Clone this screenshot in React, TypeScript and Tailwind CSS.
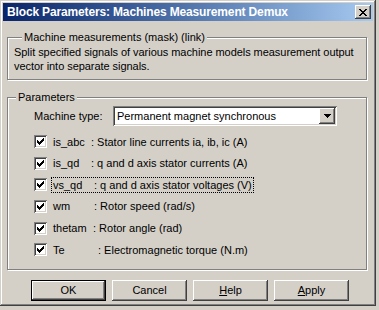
import React from 'react';

const raised =
  'shadow-[inset_-1px_-1px_#404040,inset_1px_1px_#ffffff,inset_-2px_-2px_#808080,inset_2px_2px_#d4d0c8]';
const sunken =
  'shadow-[inset_1px_1px_#808080,inset_-1px_-1px_#ffffff,inset_2px_2px_#404040,inset_-2px_-2px_#d4d0c8]';
const etched = 'border border-[#808080] shadow-[1px_1px_0_#ffffff,inset_1px_1px_0_#ffffff]';

const signals = [
  { name: 'is_abc', w: 'w-[38px]', desc: ': Stator line currents ia, ib, ic (A)' },
  { name: 'is_qd', w: 'w-[38px]', desc: ': q and d axis stator currents (A)' },
  { name: 'vs_qd', w: 'w-[41px]', desc: ': q and d axis stator voltages (V)', focus: true },
  { name: 'wm', w: 'w-[41px]', desc: ': Rotor speed (rad/s)' },
  { name: 'thetam', w: 'w-[40px]', desc: ': Rotor angle (rad)' },
  { name: 'Te', w: 'w-[45px]', desc: ': Electromagnetic torque (N.m)' },
];

function CheckBox() {
  return (
    <div className={`w-[13px] h-[13px] bg-white ${sunken} flex items-center justify-center shrink-0`}>
      <svg width="7" height="7" viewBox="0 0 7 7" shapeRendering="crispEdges">
        <path d="M0 2h1v1h1v1h1v-1h1v-1h1v-1h1v-1h1v3h-1v1h-1v1h-1v1h-1v1h-1v-1h-1v-1h-1z" fill="#000" />
      </svg>
    </div>
  );
}

function Button({ children, def }: { children: React.ReactNode; def?: boolean }) {
  return (
    <div className={`w-[75px] h-[21px] ${def ? 'border border-black' : ''}`}>
      <div className={`w-full h-full bg-[#d4d0c8] ${raised} flex items-center justify-center text-[11px] text-black`}>
        {children}
      </div>
    </div>
  );
}

export default function App() {
  return (
    <div className="w-[379px] h-[310px] bg-[#d4d0c8] font-['Liberation_Sans',Arial,sans-serif] text-black">
      <div
        className={`w-[376px] h-[306px] bg-[#d4d0c8] p-[3px] flex flex-col shadow-[inset_-1px_-1px_#404040,inset_1px_1px_#d4d0c8,inset_-2px_-2px_#808080,inset_2px_2px_#ffffff]`}
      >
        {/* title bar */}
        <div className="h-[18px] flex items-center justify-between bg-linear-to-r from-[#0a246a] to-[#a6caf0] pl-[4px] pr-[2px]">
          <span className="text-white font-bold text-[12px] tracking-[-0.15px] leading-none">
            Block Parameters: Machines Measurement Demux
          </span>
          <div className={`w-[16px] h-[14px] bg-[#d4d0c8] ${raised} flex items-center justify-center`}>
            <svg width="8" height="7" viewBox="0 0 8 7" shapeRendering="crispEdges">
              <path
                d="M0 0h2v1h1v1h2v-1h1v-1h2v1h-1v1h-1v1h-1v1h1v1h1v1h1v1h-2v-1h-1v-1h-2v1h-1v1h-2v-1h1v-1h1v-1h1v-1h-1v-1h-1v-1h-1z"
                fill="#000"
              />
            </svg>
          </div>
        </div>

        <div className="flex flex-col pl-[4px] pr-[6px]">
          {/* mask group */}
          <fieldset className={`mt-[9px] h-[50px] ${etched} pl-[6px] pt-[1px]`}>
            <legend className="ml-[8px] px-[2px] text-[11px] leading-[14px] bg-[#d4d0c8]">
              Machine measurements (mask) (link)
            </legend>
            <p className="text-[11px] tracking-[-0.05px] leading-[14px]">
              Split specified signals of various machine models measurement output
              <br />
              vector into separate signals.
            </p>
          </fieldset>

          {/* parameters group */}
          <fieldset className={`mt-[10px] h-[180px] ${etched}`}>
            <legend className="ml-[8px] px-[2px] text-[11px] leading-[14px] bg-[#d4d0c8]">Parameters</legend>

            <div className="mt-[2px] pl-[26px] flex items-center h-[20px]">
              <span className="text-[11px] w-[79px]">Machine type:</span>
              <div className={`w-[224px] h-[20px] bg-white ${sunken} flex items-center justify-between pl-[4px] pr-[2px]`}>
                <span className="text-[11px]">Permanent magnet synchronous</span>
                <div className={`w-[16px] h-[16px] bg-[#d4d0c8] ${raised} flex items-center justify-center`}>
                  <svg width="7" height="4" viewBox="0 0 7 4" shapeRendering="crispEdges">
                    <path d="M0 0h7v1h-1v1h-1v1h-1v1h-1v-1h-1v-1h-1v-1h-1z" fill="#000" />
                  </svg>
                </div>
              </div>
            </div>

            <div className="mt-[5px] pl-[26px] flex flex-col">
              {signals.map(s => (
                <div key={s.name} className="h-[21.6px] flex items-center">
                  <CheckBox />
                  <span
                    className={`ml-[4px] px-[1px] h-[16px] flex items-center text-[11px] whitespace-pre border ${
                      s.focus ? 'border-dotted border-black' : 'border-transparent'
                    }`}
                  >
                    <span className={`inline-block ${s.w}`}>{s.name}</span>
                    {s.desc}
                  </span>
                </div>
              ))}
            </div>
          </fieldset>

          {/* buttons */}
          <div className="mt-[10px] pl-[24px] flex gap-[6px]">
            <Button def>OK</Button>
            <Button>Cancel</Button>
            <Button>
              <span>
                <span className="underline">H</span>elp
              </span>
            </Button>
            <Button>
              <span>
                <span className="underline">A</span>pply
              </span>
            </Button>
          </div>
        </div>
      </div>
    </div>
  );
}
